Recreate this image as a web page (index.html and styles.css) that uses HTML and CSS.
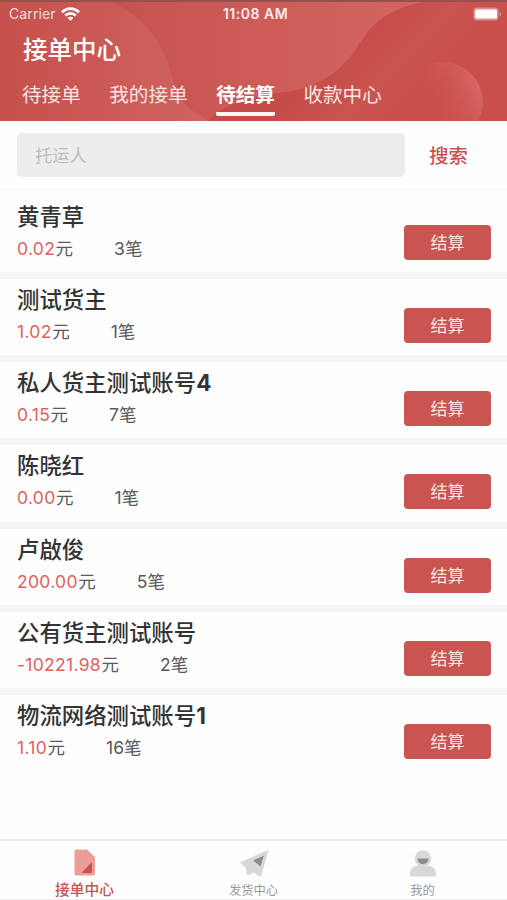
FILE: index.html
```html
<!DOCTYPE html>
<html lang="zh-CN">

<head>
    <meta charset="UTF-8">
    <meta name="viewport" content="width=device-width, initial-scale=1.0">
    <title>接单中心</title>
    <link rel="stylesheet" href="styles.css">
</head>

<body>
    <header>
        <svg class="header-bg" viewBox="0 0 507 121" preserveAspectRatio="none">
            <defs>
                <linearGradient id="wave" x1="0.2" y1="0" x2="0.9" y2="0">
                    <stop offset="0" stop-color="#c5514d"/>
                    <stop offset="1" stop-color="#d36460"/>
                </linearGradient>
                <linearGradient id="hill" gradientUnits="userSpaceOnUse" x1="330" y1="60" x2="400" y2="130">
                    <stop offset="0" stop-color="#c64c48"/>
                    <stop offset="0.5" stop-color="#c95450"/>
                    <stop offset="1" stop-color="#c94f4b"/>
                </linearGradient>
                <linearGradient id="left" x1="0" y1="0" x2="1" y2="0">
                    <stop offset="0" stop-color="#c6504c"/>
                    <stop offset="1" stop-color="#d06460"/>
                </linearGradient>
                <linearGradient id="ball" gradientUnits="userSpaceOnUse" x1="425" y1="105" x2="482" y2="80">
                    <stop offset="0" stop-color="#cb504c" stop-opacity="0"/>
                    <stop offset="1" stop-color="#d76a66"/>
                </linearGradient>
            </defs>
            <rect width="507" height="121" fill="#c95450"/>
            <path d="M105 0H434C386 7 371 25 356 49C340 74 315 87 292 91C250 97 220 105 208 121H0V0Z" fill="url(#wave)"/>
            <path d="M0 0H105C143 12 165 45 172 77C176 98 188 111 210 121H0Z" fill="url(#left)"/>
            <path d="M434 0H507V121H208C220 105 250 97 292 91C315 87 340 74 356 49C371 25 386 7 434 0Z" fill="url(#hill)"/>
            <path d="M425 66C452 53 483 73 483 103C483 109 481 115 478 121H425Z" fill="url(#ball)"/>
            <rect width="507" height="2" fill="#98504e"/>
        </svg>
        <div class="status">
            <div class="carrier">
                <span>Carrier</span>
                <svg width="19" height="14" viewBox="0 0 19 14" fill="none" stroke="#fff" stroke-width="2.7">
                    <path d="M1 5.2C5.8 .5 13.2 .5 18 5.2"/>
                    <path d="M4.2 8.5C7.2 5.6 11.8 5.6 14.8 8.5"/>
                    <path d="M6.7 10.9C8.3 9.3 10.7 9.3 12.3 10.9L9.5 13.8Z" fill="#fff" stroke="none"/>
                </svg>
            </div>
            <div class="time">11:08 AM</div>
            <svg class="battery" width="29" height="14" viewBox="0 0 29 14">
                <rect x=".5" y=".5" width="25" height="13" rx="3.5" fill="#dc8f8b"/>
                <rect x="2" y="2.5" width="22" height="9" rx="1.5" fill="#fff"/>
                <path d="M26.5 4.5v5c2-.8 2-4.2 0-5Z" fill="#dc9390"/>
            </svg>
        </div>
        <h1>接单中心</h1>
        <nav>
            <a>待接单</a>
            <a>我的接单</a>
            <a class="active">待结算</a>
            <a>收款中心</a>
        </nav>
    </header>

    <div class="search">
        <input type="text" placeholder="托运人">
        <button>搜索</button>
    </div>

    <main class="list">
        <div class="item">
            <div class="info">
                <h2>黄青草</h2>
                <p><span class="money">0.02</span>元<span class="count">3笔</span></p>
            </div>
            <button>结算</button>
        </div>
        <div class="item">
            <div class="info">
                <h2>测试货主</h2>
                <p><span class="money">1.02</span>元<span class="count">1笔</span></p>
            </div>
            <button>结算</button>
        </div>
        <div class="item">
            <div class="info">
                <h2>私人货主测试账号<b>4</b></h2>
                <p><span class="money">0.15</span>元<span class="count">7笔</span></p>
            </div>
            <button>结算</button>
        </div>
        <div class="item">
            <div class="info">
                <h2>陈晓红</h2>
                <p><span class="money">0.00</span>元<span class="count">1笔</span></p>
            </div>
            <button>结算</button>
        </div>
        <div class="item">
            <div class="info">
                <h2>卢啟俊</h2>
                <p><span class="money">200.00</span>元<span class="count">5笔</span></p>
            </div>
            <button>结算</button>
        </div>
        <div class="item">
            <div class="info">
                <h2>公有货主测试账号</h2>
                <p><span class="money">-10221.98</span>元<span class="count">2笔</span></p>
            </div>
            <button>结算</button>
        </div>
        <div class="item">
            <div class="info">
                <h2>物流网络测试账号<b>1</b></h2>
                <p><span class="money">1.10</span>元<span class="count">16笔</span></p>
            </div>
            <button>结算</button>
        </div>
    </main>

    <footer>
        <a class="tab active">
            <svg width="30" height="30" viewBox="0 0 30 30">
                <path d="M6 1.5H17L25 9V25.5Q25 27.5 23 27.5H6.5Q4.5 27.5 4.5 25.5V3Q4.5 1.5 6 1.5Z" fill="#eb9d98"/>
                <path d="M21.5 15V24.5H12.5Z" fill="#c9514e" stroke="#c9514e" stroke-linejoin="round"/>
            </svg>
            <span>接单中心</span>
        </a>
        <a class="tab">
            <svg width="30" height="30" viewBox="0 0 30 30">
                <path d="M29 2.5L21.5 28.5L14.5 24L8.5 27L7.5 20L1.5 14.5Z" fill="#d8d8d8" stroke="#d8d8d8" stroke-linejoin="round"/>
                <path d="M25 7.5L14 12.5L21.5 18.5Z" fill="#8c8c8c"/>
            </svg>
            <span>发货中心</span>
        </a>
        <a class="tab">
            <svg width="30" height="30" viewBox="0 0 30 30">
                <path d="M2 28.5V25Q2.5 19 9.5 17.5H20.5Q27.500 19 28 25V28.500Z" fill="#d8d8d8"/>
                <circle cx="15" cy="10.5" r="8.3" fill="#d8d8d8"/>
                <path d="M9.500 10.500H20.500C20.500 18 9.500 18 9.500 10.500Z" fill="#8c8c8c"/>
            </svg>
            <span>我的</span>
        </a>
    </footer>
</body>

</html>
```
FILE: styles.css
```css
* {
    box-sizing: border-box;
}

body {
    font-family: Inter, 'Noto Sans CJK SC', sans-serif;
    margin: 0;
    height: 900px;
    display: flex;
    flex-direction: column;
    background-color: #fefefe;
    color: #333;
    overflow: hidden;
}

header {
    position: relative;
    height: 121px;
    flex-shrink: 0;
    color: white;
}

.header-bg {
    position: absolute;
    top: 0;
    left: 0;
    width: 100%;
    height: 100%;
    z-index: -1;
}

.status {
    display: grid;
    grid-template-columns: 1fr auto 1fr;
    align-items: center;
    height: 27px;
    padding: 0 5px 0 9px;
}

.carrier {
    display: flex;
    align-items: center;
    gap: 5px;
    font-size: 14px;
    letter-spacing: 0.1px;
    color: #f5dcda;
}

.time {
    font-size: 14px;
    font-weight: 600;
    letter-spacing: 0.5px;
    color: #fbeceb;
}

.battery {
    justify-self: end;
}

h1 {
    margin: 0 0 0 23px;
    padding-top: 1px;
    font-size: 24.5px;
    font-weight: 500;
    line-height: 45px;
}

nav {
    display: flex;
    gap: 28.5px;
    margin-left: 22px;
}

nav a {
    height: 43px;
    font-size: 19.6px;
    line-height: 45px;
    color: #fbe6e4;
}

nav a.active {
    font-weight: 700;
    color: white;
    border-bottom: 4px solid #fff4ee;
    border-radius: 2px;
}

button {
    border: none;
    padding: 0;
    font-family: inherit;
    cursor: pointer;
}

.search {
    display: flex;
    height: 70px;
    flex-shrink: 0;
    padding: 12px 15px 0 17px;
    border-bottom: 3px solid #fafafa;
}

.search input {
    width: 388px;
    height: 44px;
    border: none;
    border-radius: 5px;
    padding: 0 18px;
    background-color: #ededed;
    font-family: inherit;
    font-size: 17.3px;
}

.search input::placeholder {
    color: #bdbdc0;
}

.search button {
    flex: 1;
    height: 44px;
    background: none;
    color: #c9514e;
    font-size: 19.3px;
    font-weight: 500;
}

.list {
    flex: 1;
    padding-top: 5.2px;
}

.item {
    display: flex;
    justify-content: space-between;
    height: 83.1px;
    padding: 0 16px 0 17px;
    border-bottom: 7.5px solid #f5f5f5;
}

.item:last-child {
    border-bottom: none;
}

.item h2 {
    margin: 4px 0 0;
    font-size: 22.4px;
    font-weight: 500;
    line-height: 34px;
}

.item p {
    margin: 0;
    font-size: 17.5px;
    line-height: 30px;
    color: #5a5a5a;
}

.money {
    margin-right: 0.5px;
    letter-spacing: 0.3px;
    color: #e1605d;
}

.count {
    margin-left: 41px;
}

.item button {
    width: 87px;
    height: 35px;
    margin-top: 29px;
    padding-bottom: 2px;
    border-radius: 4px;
    background-color: #c95450;
    color: #fbe6e4;
    font-size: 17px;
}

footer {
    display: grid;
    grid-template-columns: repeat(3, 1fr);
    height: 61px;
    flex-shrink: 0;
    border-top: 2px solid #ececec;
    border-bottom: 1px solid #eee;
}

.tab {
    display: flex;
    flex-direction: column;
    align-items: center;
    padding-top: 7px;
    color: #999;
    font-size: 12.3px;
    line-height: 25px;
}

.tab svg {
    flex-shrink: 0;
}

.tab.active {
    color: #c9514e;
    font-size: 14.7px;
    font-weight: 500;
}
```
